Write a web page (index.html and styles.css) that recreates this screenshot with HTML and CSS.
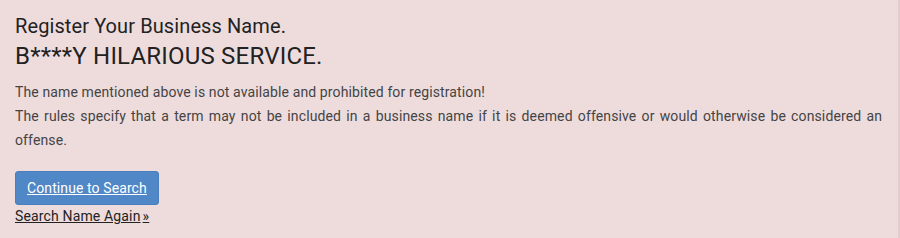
FILE: index.html
```html
<!DOCTYPE html>
<html>
<head>
<meta charset="utf-8">
<link rel="stylesheet" href="styles.css">
</head>
<body>
<div class="panel">
  <h2 class="title">Register Your Business Name.</h2>
  <h1 class="name">B****Y HILARIOUS SERVICE.</h1>
  <p class="msg">The name mentioned above is not available and prohibited for registration!<br>The rules specify that a term may not be included in a business name if it is deemed offensive or would otherwise be considered an offense.</p>
  <div class="actions">
    <a class="btn" href="#">Continue to Search</a>
    <a class="again" href="#">Search Name Again</a>
  </div>
</div>
</body>
</html>
```
FILE: styles.css
```css
html, body {
  margin: 0;
  padding: 0;
  background: #eedcdd;
}
.panel {
  box-sizing: border-box;
  width: 900px;
  height: 238px;
  padding: 12px 16px 0 15px;
  background: #eedcdd;
  border-right: 2px solid #e2cdcf;
  font-family: Roboto, "Liberation Sans", sans-serif;
  color: #222;
}
.title {
  margin: 0;
  font-size: 20px;
  font-weight: 400;
  line-height: 28px;
  letter-spacing: 0.1px;
}
.name {
  margin: 0;
  font-size: 24px;
  font-weight: 400;
  line-height: 33px;
  letter-spacing: 0.2px;
}
.msg {
  margin: 7px 0 0;
  font-size: 14px;
  line-height: 24px;
  color: #444;
  text-align: justify;
  letter-spacing: 0.12px;
}
.actions {
  margin-top: 19px;
  display: flex;
  flex-direction: column;
  align-items: flex-start;
}
.btn {
  display: inline-block;
  background: #5087c7;
  color: #fff;
  font-size: 14px;
  line-height: 20px;
  padding: 6px 11px;
  border-radius: 3px;
  border: 1px solid #4a7fbd;
  letter-spacing: 0.1px;
}
.again {
  margin-top: 1px;
  color: #222;
  font-size: 14px;
  line-height: 20px;
  letter-spacing: 0.15px;
}
.again::after {
  content: "\00BB";
  margin-left: 2px;
}
```
